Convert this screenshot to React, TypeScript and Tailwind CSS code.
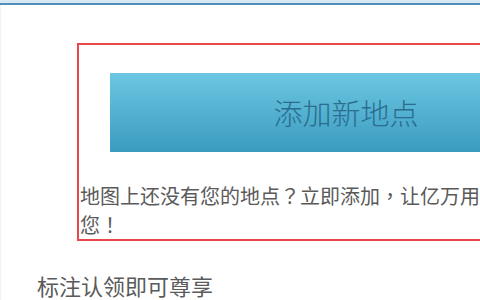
export default function App() {
  const cjk = { fontFamily: '"Noto Sans CJK SC", "Noto Sans", sans-serif' };
  // centred full-width punctuation, as in the screenshot
  const punct = { fontFamily: '"Noto Sans CJK TC", "Noto Sans CJK SC", sans-serif' };

  return (
    <div className="w-[480px] h-[300px] overflow-hidden bg-white" style={cjk}>
      <div className="h-[3px] bg-[#d6e9f4]" />
      <div className="h-[2px] bg-[#4f8fbb]" />
      <div className="border-l border-[#f2f2f2] h-[295px]">
        <div className="pl-[76px] pt-[38px]">
          <div className="w-[470px] border-2 border-[#e8474c]">
            <div className="pt-[28px] pl-[31px]">
              <div className="w-[472px] h-[79px] bg-gradient-to-b from-[#6cc7e3] to-[#3a9bbf] flex items-center justify-center">
                <span className="text-[29px] leading-none text-[#2a6d8e] font-light">
                  添加新地点
                </span>
              </div>
            </div>
            <p className="mt-[29px] pl-px w-[466px] text-[20px] leading-[29px] text-[#5a5a5a]">
              地图上还没有您的地点<span style={punct}>？</span>立即添加<span style={punct}>，</span>让亿万用户找到您<span style={punct}>！</span>
            </p>
          </div>
        </div>
        <div className="pl-[36px] mt-[29px] text-[22px] leading-[30px] text-[#5a5a5a]">
          标注认领即可尊享
        </div>
      </div>
    </div>
  );
}
